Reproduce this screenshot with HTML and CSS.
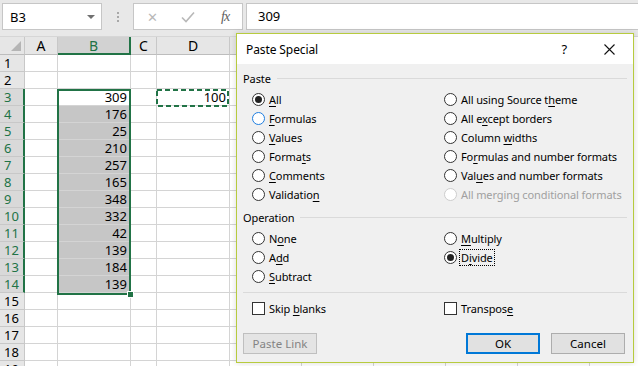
FILE: index.html
```html
<!DOCTYPE html>
<html lang="en">
<head>
    <meta charset="UTF-8">
    <title>Paste Special</title>
    <link rel="stylesheet" href="styles.css">
</head>
<body>
    <div class="toolbar">
        <div class="name-box">
            <span>B3</span>
            <span class="drop"></span>
        </div>
        <div class="grip"><i></i><i></i><i></i></div>
        <div class="fx-buttons">
            <span class="fx-btn">&#x2715;</span>
            <svg class="fx-btn" width="14" height="12" viewBox="0 0 14 12"><path d="M1 6.5 L5 10.5 L13 1.5" fill="none" stroke="#b8b8b8" stroke-width="1.6"/></svg>
            <span class="fx-label">fx</span>
        </div>
        <div class="formula">309</div>
    </div>

    <div class="sheet-wrap">
        <table class="sheet">
            <colgroup>
                <col class="c-row"><col class="c-a"><col class="c-b"><col class="c-c"><col class="c-d"><col class="c-e"><col class="c-e"><col class="c-e"><col class="c-e"><col class="c-e">
            </colgroup>
            <tr class="head">
                <th class="corner"><span class="tri"></span></th><th>A</th><th class="cur">B</th><th>C</th><th>D</th><th>E</th><th>F</th><th>G</th><th>H</th><th>I</th>
            </tr>
            <tr><th>1</th><td></td><td></td><td></td><td></td><td></td><td></td><td></td><td></td><td></td></tr>
            <tr><th>2</th><td></td><td></td><td></td><td></td><td></td><td></td><td></td><td></td><td></td></tr>
            <tr><th class="cur">3</th><td></td><td class="num">309</td><td></td><td class="num">100</td><td></td><td></td><td></td><td></td><td></td></tr>
            <tr><th class="cur">4</th><td></td><td class="num sel">176</td><td></td><td></td><td></td><td></td><td></td><td></td><td></td></tr>
            <tr><th class="cur">5</th><td></td><td class="num sel">25</td><td></td><td></td><td></td><td></td><td></td><td></td><td></td></tr>
            <tr><th class="cur">6</th><td></td><td class="num sel">210</td><td></td><td></td><td></td><td></td><td></td><td></td><td></td></tr>
            <tr><th class="cur">7</th><td></td><td class="num sel">257</td><td></td><td></td><td></td><td></td><td></td><td></td><td></td></tr>
            <tr><th class="cur">8</th><td></td><td class="num sel">165</td><td></td><td></td><td></td><td></td><td></td><td></td><td></td></tr>
            <tr><th class="cur">9</th><td></td><td class="num sel">348</td><td></td><td></td><td></td><td></td><td></td><td></td><td></td></tr>
            <tr><th class="cur">10</th><td></td><td class="num sel">332</td><td></td><td></td><td></td><td></td><td></td><td></td><td></td></tr>
            <tr><th class="cur">11</th><td></td><td class="num sel">42</td><td></td><td></td><td></td><td></td><td></td><td></td><td></td></tr>
            <tr><th class="cur">12</th><td></td><td class="num sel">139</td><td></td><td></td><td></td><td></td><td></td><td></td><td></td></tr>
            <tr><th class="cur">13</th><td></td><td class="num sel">184</td><td></td><td></td><td></td><td></td><td></td><td></td><td></td></tr>
            <tr><th class="cur">14</th><td></td><td class="num sel">139</td><td></td><td></td><td></td><td></td><td></td><td></td><td></td></tr>
            <tr><th>15</th><td></td><td></td><td></td><td></td><td></td><td></td><td></td><td></td><td></td></tr>
            <tr><th>16</th><td></td><td></td><td></td><td></td><td></td><td></td><td></td><td></td><td></td></tr>
            <tr><th>17</th><td></td><td></td><td></td><td></td><td></td><td></td><td></td><td></td><td></td></tr>
            <tr><th>18</th><td></td><td></td><td></td><td></td><td></td><td></td><td></td><td></td><td></td></tr>
            <tr><th>19</th><td></td><td></td><td></td><td></td><td></td><td></td><td></td><td></td><td></td></tr>
        </table>
        <div class="selection"><span class="handle"></span></div>
        <svg class="copy-ants" width="73" height="18" viewBox="0 0 73 18"><rect x="1" y="1" width="71" height="16" fill="none" stroke="#217346" stroke-width="2" stroke-dasharray="5 3"/></svg>
    </div>

    <div class="dialog">
        <div class="title-bar">
            <span class="title">Paste Special</span>
            <span class="help">?</span>
            <svg class="close" width="11" height="11" viewBox="0 0 11 11"><path d="M0.5 0.5 L10.5 10.5 M10.5 0.5 L0.5 10.5" stroke="#111" stroke-width="1.1"/></svg>
        </div>
        <div class="dlg-body">
            <div class="group-title"><span>Paste</span></div>
            <div class="options">
                <label class="opt"><span class="radio on"></span><span><u>A</u>ll</span></label>
                <label class="opt"><span class="radio"></span><span>All using Source t<u>h</u>eme</span></label>
                <label class="opt"><span class="radio hover"></span><span><u>F</u>ormulas</span></label>
                <label class="opt"><span class="radio"></span><span>All e<u>x</u>cept borders</span></label>
                <label class="opt"><span class="radio"></span><span><u>V</u>alues</span></label>
                <label class="opt"><span class="radio"></span><span>Column <u>w</u>idths</span></label>
                <label class="opt"><span class="radio"></span><span>Forma<u>t</u>s</span></label>
                <label class="opt"><span class="radio"></span><span>Fo<u>r</u>mulas and number formats</span></label>
                <label class="opt"><span class="radio"></span><span><u>C</u>omments</span></label>
                <label class="opt"><span class="radio"></span><span>Val<u>u</u>es and number formats</span></label>
                <label class="opt"><span class="radio"></span><span>Validatio<u>n</u></span></label>
                <label class="opt disabled"><span class="radio"></span><span>All merging conditional formats</span></label>
            </div>

            <div class="group-title op"><span>Operation</span></div>
            <div class="options">
                <label class="opt"><span class="radio"></span><span>N<u>o</u>ne</span></label>
                <label class="opt"><span class="radio"></span><span><u>M</u>ultiply</span></label>
                <label class="opt"><span class="radio"></span><span>A<u>d</u>d</span></label>
                <label class="opt"><span class="radio on"></span><span class="focus">D<u>i</u>vide</span></label>
                <label class="opt"><span class="radio"></span><span><u>S</u>ubtract</span></label>
            </div>

            <div class="separator"></div>

            <div class="options checks">
                <label class="opt"><span class="check"></span><span>Skip <u>b</u>lanks</span></label>
                <label class="opt"><span class="check"></span><span>Transpos<u>e</u></span></label>
            </div>

            <div class="buttons">
                <button class="btn" disabled>Paste Link</button>
                <span class="spacer"></span>
                <button class="btn default">OK</button>
                <button class="btn">Cancel</button>
            </div>
        </div>
    </div>
</body>
</html>
```

FILE: styles.css
```css
:root {
    --excel-green: #217346;
    --grid: #d4d4d4;
    --head-bg: #e6e6e6;
    --dialog-bg: #f0f0f0;
}

* {
    margin: 0;
    padding: 0;
    box-sizing: border-box;
}

body {
    width: 638px;
    height: 366px;
    overflow: hidden;
    position: relative;
    background: #fff;
    font-family: 'Noto Sans', 'Open Sans', sans-serif;
    color: #000;
}

/* formula bar */
.toolbar {
    height: 37px;
    background: #e8e8e8;
    display: flex;
    align-items: flex-start;
    padding: 3px 0 0 2px;
    border-bottom: 1px solid #d6d6d6;
}

.name-box {
    width: 100px;
    height: 27px;
    background: #fff;
    border: 1px solid #c6c6c6;
    display: flex;
    align-items: center;
    justify-content: space-between;
    padding: 0 6px 0 7px;
    font-size: 13px;
}

.name-box .drop {
    width: 0;
    height: 0;
    border-left: 4px solid transparent;
    border-right: 4px solid transparent;
    border-top: 4px solid #707070;
}

.grip {
    width: 31px;
    height: 27px;
    display: flex;
    flex-direction: column;
    align-items: center;
    justify-content: center;
    gap: 2px;
}

.grip i {
    display: block;
    width: 2px;
    height: 2px;
    background: #a8a8a8;
}

.fx-buttons {
    width: 110px;
    height: 27px;
    background: #fff;
    border: 1px solid #c6c6c6;
    display: flex;
    align-items: center;
    padding-left: 13px;
}

.fx-btn {
    color: #b8b8b8;
    font-size: 13px;
    width: 14px;
}

svg.fx-btn {
    margin-left: 20px;
}

.fx-label {
    margin-left: 26px;
    font-family: 'Liberation Serif', serif;
    font-style: italic;
    font-size: 14px;
    color: #606060;
    letter-spacing: -1px;
}

.formula {
    flex: 1;
    height: 27px;
    margin-left: 3px;
    background: #fff;
    border: 1px solid #c6c6c6;
    border-right: none;
    font-size: 13px;
    line-height: 25px;
    padding-left: 11px;
}

/* grid */
.sheet-wrap {
    position: relative;
}

.sheet {
    border-collapse: separate;
    border-spacing: 0;
    table-layout: fixed;
    width: 590px;
    font-size: 13px;
}

.c-row { width: 25px; }
.c-a { width: 33px; }
.c-b { width: 73px; }
.c-c { width: 26px; }
.c-d { width: 73px; }
.c-e { width: 72px; }

.sheet th,
.sheet td {
    height: 17px;
    border-right: 1px solid var(--grid);
    border-bottom: 1px solid var(--grid);
    padding: 0;
    line-height: 15px;
    overflow: hidden;
    white-space: nowrap;
}

.sheet th {
    background: var(--head-bg);
    font-weight: normal;
    border-color: #c8c8c8;
    text-align: center;
}

.sheet tr th:first-child {
    text-align: left;
    padding-left: 4px;
}

.sheet .head th {
    height: 18px;
    font-size: 14px;
    text-align: center;
    padding-left: 0;
    border-bottom: 1px solid #bdbdbd;
}

.sheet .head th.cur {
    background: #d2d2d2;
    color: var(--excel-green);
    border-bottom: 2px solid var(--excel-green);
}

.sheet th.cur {
    background: #d9d9d9;
    color: var(--excel-green);
    border-right: 2px solid var(--excel-green);
}

.corner {
    position: relative;
}

.corner .tri {
    position: absolute;
    right: 3px;
    bottom: 3px;
    width: 0;
    height: 0;
    border-left: 10px solid transparent;
    border-bottom: 10px solid #b5b5b5;
}

.sheet td.num {
    text-align: right;
    padding-right: 3px;
}

.sheet td.sel {
    background: #c6c6c6;
    box-shadow: inset 1px 0 0 #fff;
}

.selection {
    position: absolute;
    left: 57px;
    top: 52px;
    width: 74px;
    height: 206px;
    border: 2px solid var(--excel-green);
    pointer-events: none;
}

.selection .handle {
    position: absolute;
    right: -5px;
    bottom: -5px;
    width: 7px;
    height: 7px;
    background: var(--excel-green);
    border: 1px solid #fff;
}

.copy-ants {
    position: absolute;
    left: 156px;
    top: 52px;
}

/* dialog */
.dialog {
    position: absolute;
    left: 236px;
    top: 33px;
    width: 398px;
    height: 330px;
    border: 1px solid #b7cb3e;
    background: var(--dialog-bg);
    font-size: 11px;
    letter-spacing: -0.1px;
    box-shadow: 0 0 6px rgba(0, 0, 0, 0.15);
}

.title-bar {
    height: 30px;
    background: #fff;
    display: flex;
    align-items: center;
    padding-left: 9px;
    font-size: 12px;
}

.title-bar .title {
    flex: 1;
}

.title-bar .help {
    font-size: 13px;
    margin-right: 37px;
}

.title-bar .close {
    margin-right: 18px;
}

.dlg-body {
    padding: 0 6px;
}

.group-title {
    display: flex;
    align-items: center;
    height: 16px;
    margin-top: 6px;
    gap: 6px;
}

.group-title::after {
    content: "";
    flex: 1;
    height: 1px;
    background: #dadada;
}

.group-title.op {
    margin-top: 5px;
}

.options {
    display: grid;
    grid-template-columns: 192px 1fr;
    grid-auto-rows: 19px;
    padding-left: 9px;
    margin-top: 4px;
}

.opt {
    display: flex;
    align-items: center;
    gap: 4px;
    white-space: nowrap;
}

.opt u {
    text-underline-offset: 2px;
}

.radio {
    width: 13px;
    height: 13px;
    border: 1px solid #333;
    border-radius: 50%;
    background: #fff;
    flex-shrink: 0;
    position: relative;
}

.radio.on::after {
    content: "";
    position: absolute;
    left: 2px;
    top: 2px;
    width: 7px;
    height: 7px;
    border-radius: 50%;
    background: #222;
}

.radio.hover {
    border-color: #1e7ee0;
}

.opt.disabled {
    color: #a0a0a0;
}

.opt.disabled .radio {
    border-color: #cdcdcd;
}

.focus {
    outline: 1px dotted #000;
    padding: 0 1px;
    margin-left: -1px;
}

.separator {
    height: 1px;
    background: #dadada;
    margin-top: 6px;
}

.checks {
    margin-top: 6px;
}

.check {
    width: 13px;
    height: 13px;
    border: 1px solid #333;
    background: #fff;
    flex-shrink: 0;
}

.buttons {
    display: flex;
    margin-top: 15px;
    padding-right: 2px;
    gap: 11px;
}

.spacer {
    flex: 1;
}

.btn {
    width: 74px;
    height: 21px;
    font-family: inherit;
    font-size: 11.5px;
    background: #e1e1e1;
    border: 1px solid #adadad;
    color: #000;
}

.btn:disabled {
    color: #838383;
    border-color: #bfbfbf;
    background: #e4e4e4;
}

.btn.default {
    border: 2px solid #0078d7;
}
```
